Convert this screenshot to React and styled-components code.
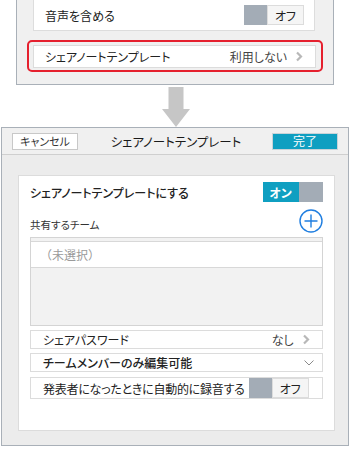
import React from 'react';
import styled, { createGlobalStyle } from 'styled-components';

const GlobalStyle = createGlobalStyle`
  html, body {
    margin: 0;
    padding: 0;
    background: #ffffff;
  }
  body {
    font-family: "Noto Sans CJK JP", "Noto Sans", sans-serif;
    font-feature-settings: "palt";
    color: #222222;
    font-size: 12px;
  }
`;

const Page = styled.div`
  width: 350px;
  height: 449px;
  overflow: hidden;
  display: flex;
  flex-direction: column;
`;

// ---- upper (before) panel ----

const TopPanel = styled.div`
  margin: 0 16px;
  height: 85px;
  box-sizing: border-box;
  background: #f0f0f0;
  border: 1px solid #a9b0b8;
  border-top: none;
  display: flex;
  flex-direction: column;
`;

const TopCard = styled.div`
  margin: 0 18px 0 16px;
  height: 31px;
  box-sizing: border-box;
  background: #ffffff;
  border: 1px solid #dddddd;
  border-top: none;
  display: flex;
  align-items: center;
  justify-content: space-between;
  padding: 0 10px 0 11px;
`;

const Highlight = styled.div`
  margin: 9px 10px 0 10px;
  height: 32px;
  box-sizing: border-box;
  border: 2px solid #e5202e;
  border-radius: 5px;
  padding: 3px 5px 2px 4px;
  display: flex;
`;

const Row = styled.div`
  flex: 1;
  height: ${p => p.h || 24}px;
  box-sizing: border-box;
  background: #ffffff;
  border: 1px solid #dcdcdc;
  display: flex;
  align-items: center;
  justify-content: space-between;
  gap: 4px;
  white-space: nowrap;
  padding: 0 ${p => p.pr || 12}px 0 ${p => p.pl || 12}px;
  font-weight: ${p => (p.bold ? 500 : 400)};
`;

const Value = styled.span`
  display: flex;
  align-items: center;
  gap: 8px;
  color: #444444;
`;

// ---- arrow ----

const ArrowArea = styled.div`
  height: 42px;
  display: flex;
  justify-content: center;
  align-items: flex-end;
  padding-left: 1px;
`;

// ---- lower (after) panel ----

const Dialog = styled.div`
  margin: 0 1px;
  height: 319px;
  box-sizing: border-box;
  border: 1px solid #a9b0b8;
  background: #ececec;
  display: flex;
  flex-direction: column;
`;

const Header = styled.div`
  height: 26px;
  background: #f0f0f0;
  border-bottom: 1px solid #cfcfcf;
  display: flex;
  align-items: center;
  justify-content: space-between;
  padding: 0 10px;
`;

const HeadButton = styled.div`
  width: 66px;
  height: 17px;
  box-sizing: border-box;
  border: 1px solid ${p => (p.primary ? '#c9d3d8' : '#c8c8c8')};
  background: ${p => (p.primary ? '#0f9fc1' : '#ffffff')};
  color: ${p => (p.primary ? '#ffffff' : '#333333')};
  font-size: ${p => (p.primary ? 12 : 11)}px;
  display: flex;
  align-items: center;
  justify-content: center;
  line-height: 1;
`;

const Title = styled.div`
  font-size: 12.5px;
  color: #1a1a1a;
  padding-left: 2px;
`;

const Body = styled.div`
  flex: 1;
  padding: 20px 15px 14px 16px;
  display: flex;
`;

const Card = styled.div`
  flex: 1;
  box-sizing: border-box;
  background: #ffffff;
  border: 1px solid #dcdcdc;
  padding: 6px 11px 7px 11px;
  display: flex;
  flex-direction: column;
`;

const Line = styled.div`
  display: flex;
  align-items: center;
  justify-content: space-between;
  height: ${p => p.h}px;
  margin-bottom: ${p => p.mb || 0}px;
  font-weight: ${p => (p.bold ? 500 : 400)};
`;

const Label = styled.span`
  font-size: 10.5px;
  padding-top: 8px;
  color: #333333;
`;

const TeamList = styled.div`
  height: 89px;
  box-sizing: border-box;
  border: 1px solid #d4d4d4;
  background: #f2f2f2;
  padding-top: 3px;
  margin-bottom: 4px;
`;

const TeamItem = styled.div`
  height: 27px;
  box-sizing: border-box;
  background: #ffffff;
  border-top: 1px solid #d8d8d8;
  border-bottom: 1px solid #d8d8d8;
  display: flex;
  align-items: center;
  padding-left: 9px;
  color: #9a9a9a;
  font-size: 12px;
  font-feature-settings: normal;
`;

const Stack = styled.div`
  display: flex;
  flex-direction: column;
  gap: ${p => p.gap}px;
`;

const LongText = styled.span`
  letter-spacing: -0.25px;
`;

const Toggle = styled.div`
  display: flex;
  width: 60px;
  height: 20px;
  flex-shrink: 0;
`;

const ToggleSide = styled.div`
  width: ${p => p.w}px;
  box-sizing: border-box;
  display: flex;
  align-items: center;
  justify-content: center;
  font-size: 12px;
  background: ${p => p.bg};
  color: ${p => p.fg || '#222222'};
  font-weight: ${p => (p.bold ? 700 : 400)};
  border: ${p => (p.bordered ? '1px solid #dcdcdc' : 'none')};
`;

const OnToggle = () => (
  <Toggle>
    <ToggleSide w={36} bg="#0f9fc1" fg="#ffffff" bold>オン</ToggleSide>
    <ToggleSide w={24} bg="#a3acb6" />
  </Toggle>
);

const OffToggle = () => (
  <Toggle>
    <ToggleSide w={23} bg="#a3acb6" />
    <ToggleSide w={37} bg="#f5f5f5" bordered>オフ</ToggleSide>
  </Toggle>
);

const ChevronRight = () => (
  <svg width="8" height="11" viewBox="0 0 8 11">
    <path d="M2 1.5 L6 5.5 L2 9.5" fill="none" stroke="#b8b8b8" strokeWidth="2.2" />
  </svg>
);

const ChevronDown = () => (
  <svg width="10" height="6" viewBox="0 0 10 6">
    <path d="M0.5 0.5 L5 5 L9.5 0.5" fill="none" stroke="#8a8a8a" strokeWidth="1" />
  </svg>
);

const PlusCircle = () => (
  <svg width="24" height="24" viewBox="0 0 24 24">
    <circle cx="12" cy="12" r="11" fill="none" stroke="#1f7ee0" strokeWidth="1.4" />
    <path d="M12 5.5 V18.5 M5.5 12 H18.5" stroke="#1f7ee0" strokeWidth="1.4" />
  </svg>
);

const DownArrow = () => (
  <svg width="30" height="40" viewBox="0 0 30 40">
    <path d="M7.5 0 H22.5 V22 H29 L15 40 L1 22 H7.5 Z" fill="#c6c6c6" />
  </svg>
);

export default function App() {
  return (
    <Page>
      <GlobalStyle />
      <TopPanel>
        <TopCard>
          <span>音声を含める</span>
          <OffToggle />
        </TopCard>
        <Highlight>
          <Row h={23} pl={11} pr={12}>
            <span>シェアノートテンプレート</span>
            <Value>
              利用しない
              <ChevronRight />
            </Value>
          </Row>
        </Highlight>
      </TopPanel>

      <ArrowArea>
        <DownArrow />
      </ArrowArea>

      <Dialog>
        <Header>
          <HeadButton>キャンセル</HeadButton>
          <Title>シェアノートテンプレート</Title>
          <HeadButton primary>完了</HeadButton>
        </Header>
        <Body>
          <Card>
            <Line h={20} mb={8} bold>
              <span>シェアノートテンプレートにする</span>
              <OnToggle />
            </Line>
            <Line h={21} mb={6}>
              <Label>共有するチーム</Label>
              <PlusCircle />
            </Line>
            <TeamList>
              <TeamItem>（未選択）</TeamItem>
            </TeamList>
            <Stack gap={4}>
              <Row h={24}>
                <span>シェアパスワード</span>
                <Value>
                  なし
                  <ChevronRight />
                </Value>
              </Row>
              <Row h={27} bold pr={8}>
                <span>チームメンバーのみ編集可能</span>
                <ChevronDown />
              </Row>
              <Row h={33} pr={13} style={{ marginTop: 1 }}>
                <LongText>発表者になったときに自動的に録音する</LongText>
                <OffToggle />
              </Row>
            </Stack>
          </Card>
        </Body>
      </Dialog>
    </Page>
  );
}
